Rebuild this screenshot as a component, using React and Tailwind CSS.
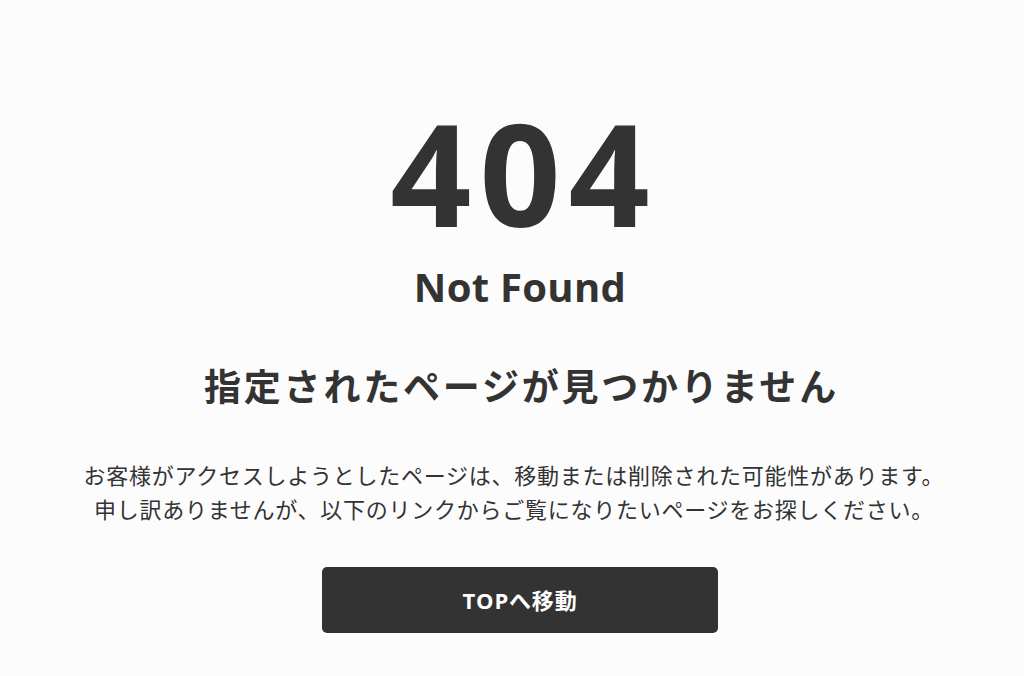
import React from 'react';

const App = () => {
  return (
    <div
      className="min-h-screen w-full bg-[#fcfcfc] text-[#333333] flex flex-col items-center pt-[101px] pl-[16px]"
      style={{ fontFamily: '"Open Sans", "Noto Sans CJK JP", sans-serif' }}
    >
      {/* Error code */}
      <h1 className="text-[142px] leading-none font-bold tracking-[8px] pl-[8px]">404</h1>
      <p className="mt-[24px] text-[40px] leading-none font-bold tracking-[0.3px]">Not Found</p>

      {/* Message */}
      <h2 className="mt-[61px] text-[37px] leading-none font-bold tracking-[2.8px] pl-[3px]">
        指定されたページが見つかりません
      </h2>
      <div className="mt-[53px] mr-[12px] text-[22px] leading-[34px] tracking-[0.75px] text-center">
        <p>お客様がアクセスしようとしたページは、移動または削除された可能性があります。</p>
        <p>申し訳ありませんが、以下のリンクからご覧になりたいページをお探しください。</p>
      </div>

      <a
        href="#"
        className="mt-[41px] w-[396px] h-[66px] flex items-center justify-center rounded-[5px] bg-[#333333] text-white text-[22px] font-bold tracking-[0.8px]"
      >
        TOPへ移動
      </a>
    </div>
  );
};

export default App;
